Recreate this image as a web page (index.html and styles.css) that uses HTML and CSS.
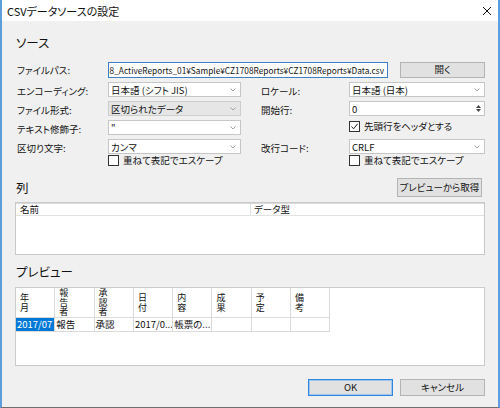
FILE: index.html
```html
<!DOCTYPE html>
<html lang="ja">
<head>
<meta charset="utf-8">
<title>CSVデータソースの設定</title>
<link rel="stylesheet" href="styles.css">
</head>
<body>
<div class="window">
  <div class="titlebar">
    <span class="title">CSVデータソースの設定</span>
    <svg class="close" viewBox="0 0 8 8" width="8" height="8"><path d="M0 0L8 8M8 0L0 8" stroke="#111" stroke-width="1"/></svg>
  </div>
  <div class="content">
    <h2 class="section-title">ソース</h2>
    <div class="path-row">
      <span class="lbl">ファイルパス:</span>
      <div class="textbox"><span class="path">8_ActiveReports_01¥Sample¥CZ1708Reports¥CZ1708Reports¥Data.csv</span></div>
      <button class="btn open">開く</button>
    </div>
    <div class="form-grid">
      <span class="lbl">エンコーディング:</span>
      <div class="combo"><span>日本語 (シフト JIS)</span><svg class="chev" viewBox="0 0 6 4" width="6" height="4"><path d="M0.5 0.5L3 3L5.5 0.5" fill="none" stroke="#999" stroke-width="0.9"/></svg></div>
      <span></span>
      <span class="lbl">ロケール:</span>
      <div class="combo"><span>日本語 (日本)</span><svg class="chev" viewBox="0 0 6 4" width="6" height="4"><path d="M0.5 0.5L3 3L5.5 0.5" fill="none" stroke="#999" stroke-width="0.9"/></svg></div>

      <span class="lbl">ファイル形式:</span>
      <div class="combo readonly"><span>区切られたデータ</span><svg class="chev" viewBox="0 0 6 4" width="6" height="4"><path d="M0.5 0.5L3 3L5.5 0.5" fill="none" stroke="#999" stroke-width="0.9"/></svg></div>
      <span></span>
      <span class="lbl">開始行:</span>
      <div class="combo numeric"><span>0</span>
        <div class="spin">
          <svg viewBox="0 0 5 3" width="5" height="3"><path d="M0 3L2.5 0L5 3Z" fill="#444"/></svg>
          <svg viewBox="0 0 5 3" width="5" height="3"><path d="M0 0L2.5 3L5 0Z" fill="#444"/></svg>
        </div>
      </div>

      <span class="lbl">テキスト修飾子:</span>
      <div class="combo"><span>"</span><svg class="chev" viewBox="0 0 6 4" width="6" height="4"><path d="M0.5 0.5L3 3L5.5 0.5" fill="none" stroke="#999" stroke-width="0.9"/></svg></div>
      <span></span>
      <span></span>
      <div class="check"><span class="box"><svg viewBox="0 0 9 9" width="9" height="9"><path d="M1.5 4.5L3.6 6.8L7.6 1.8" fill="none" stroke="#222" stroke-width="1"/></svg></span><span>先頭行をヘッダとする</span></div>

      <span class="lbl">区切り文字:</span>
      <div class="combo"><span>カンマ</span><svg class="chev" viewBox="0 0 6 4" width="6" height="4"><path d="M0.5 0.5L3 3L5.5 0.5" fill="none" stroke="#999" stroke-width="0.9"/></svg></div>
      <span></span>
      <span class="lbl">改行コード:</span>
      <div class="combo"><span>CRLF</span><svg class="chev" viewBox="0 0 6 4" width="6" height="4"><path d="M0.5 0.5L3 3L5.5 0.5" fill="none" stroke="#999" stroke-width="0.9"/></svg></div>

      <span></span>
      <div class="check"><span class="box"></span><span>重ねて表記でエスケープ</span></div>
      <span></span>
      <span></span>
      <div class="check"><span class="box"></span><span>重ねて表記でエスケープ</span></div>
    </div>

    <div class="list-head">
      <h2 class="section-title">列</h2>
      <button class="btn fetch">プレビューから取得</button>
    </div>
    <div class="listview">
      <div class="lv-head">
        <div class="lv-col name">名前</div>
        <div class="lv-col type">データ型</div>
      </div>
    </div>

    <h2 class="section-title preview-title">プレビュー</h2>
    <div class="gridbox">
      <div class="pv">
        <div class="hc">年<br>月</div>
        <div class="hc">報<br>告<br>者</div>
        <div class="hc">承<br>認<br>者</div>
        <div class="hc">日<br>付</div>
        <div class="hc">内<br>容</div>
        <div class="hc">成<br>果</div>
        <div class="hc">予<br>定</div>
        <div class="hc">備<br>考</div>
        <div class="dc selected">2017/07</div>
        <div class="dc">報告</div>
        <div class="dc">承認</div>
        <div class="dc">2017/0...</div>
        <div class="dc">帳票の...</div>
        <div class="dc"></div>
        <div class="dc"></div>
        <div class="dc"></div>
      </div>
    </div>

    <div class="footer">
      <button class="btn ok">OK</button>
      <button class="btn">キャンセル</button>
    </div>
  </div>
</div>
</body>
</html>
```

FILE: styles.css
```css
html, body {
  margin: 0;
  padding: 0;
  background: #f0f0f0;
}

.window {
  width: 500px;
  height: 408px;
  box-sizing: border-box;
  background: #f0f0f0;
  border-left: 2px solid #5e9ddb;
  border-right: 2px solid #5e9ddb;
  border-bottom: 1px solid #6e6e6e;
  font-family: "Noto Sans CJK JP", "Noto Sans", sans-serif;
  font-feature-settings: "palt";
  font-size: 9.5px;
  color: #111;
  display: flex;
  flex-direction: column;
}

.titlebar {
  height: 21px;
  flex-shrink: 0;
  background: #fff;
  display: flex;
  align-items: center;
  justify-content: space-between;
  padding: 0 7px 0 5px;
}

.title {
  font-size: 11px;
  line-height: 14px;
}

.close {
  display: block;
}

.content {
  flex: 1;
  display: flex;
  flex-direction: column;
  padding: 14px 13px 0 13px;
}

.section-title {
  margin: 0;
  font-size: 12.5px;
  font-weight: normal;
  line-height: 16px;
  padding-left: 1px;
}

.lbl {
  padding-left: 2px;
  line-height: 15px;
  white-space: nowrap;
}

.path-row {
  display: flex;
  align-items: center;
  height: 16px;
  margin-top: 11px;
}

.path-row .lbl {
  width: 93px;
  box-sizing: border-box;
  flex-shrink: 0;
}

.textbox {
  flex: 0 0 280px;
  height: 16px;
  box-sizing: border-box;
  border: 1px solid #3f7fc9;
  background: #fff;
  display: flex;
  justify-content: flex-end;
  align-items: center;
  overflow: hidden;
  padding-right: 3px;
}

.path {
  white-space: nowrap;
  flex-shrink: 0;
  font-size: 8.3px;
}

.btn {
  font-family: inherit;
  font-feature-settings: "palt";
  font-size: 9.5px;
  color: #111;
  background: #e1e1e1;
  border: 1px solid #b4b4b4;
  padding: 0;
  margin: 0;
  box-sizing: border-box;
  line-height: 1;
}

.open {
  width: 85px;
  height: 16px;
  margin-left: 12px;
}

.form-grid {
  display: grid;
  grid-template-columns: 93px 133px 18px 90px 136px;
  grid-template-rows: 19px 19px 19px 15px 12px;
  margin-top: 4px;
}

.form-grid .lbl {
  padding-top: 2px;
}

.combo {
  height: 15px;
  box-sizing: border-box;
  border: 1px solid #c6c6c6;
  background: #fff;
  display: flex;
  align-items: center;
  padding-left: 2px;
  white-space: nowrap;
}

.combo.readonly {
  background: #e6e6e6;
  border-color: #cdcdcd;
}

.chev {
  margin-left: auto;
  margin-right: 4px;
  display: block;
}

.numeric {
  padding-right: 3px;
}

.spin {
  margin-left: auto;
  display: flex;
  flex-direction: column;
  gap: 1px;
}

.spin svg {
  display: block;
}

.check {
  display: flex;
  align-items: center;
  gap: 4px;
  height: 12px;
  white-space: nowrap;
}

.box {
  width: 11px;
  height: 11px;
  box-sizing: border-box;
  border: 1px solid #333;
  background: #fff;
  display: flex;
  align-items: center;
  justify-content: center;
  flex-shrink: 0;
}

.box svg {
  display: block;
}

.list-head {
  display: flex;
  justify-content: space-between;
  align-items: center;
  height: 19px;
  margin-top: 12px;
}

.fetch {
  width: 85px;
  height: 19px;
  margin-right: 3px;
}

.listview {
  margin-top: 5px;
  height: 53px;
  box-sizing: border-box;
  border: 1px solid #c9c9c9;
  background: #fff;
}

.lv-head {
  display: flex;
  height: 13px;
  box-sizing: border-box;
  border-top: 1px solid #dadada;
  border-bottom: 1px solid #e2e2e2;
}

.lv-col {
  line-height: 11px;
  padding-left: 4px;
  box-sizing: border-box;
}

.lv-col.name {
  width: 235px;
  border-right: 1px solid #e2e2e2;
}

.lv-col.type {
  padding-left: 3px;
  flex: 1;
}

.preview-title {
  margin-top: 9px;
}

.gridbox {
  margin-top: 7px;
  height: 79px;
  box-sizing: border-box;
  border: 1px solid #cbcbcb;
  background: #fff;
}

.pv {
  display: grid;
  grid-template-columns: repeat(8, 39.3px);
  grid-template-rows: 30px 14px;
}

.hc, .dc {
  box-sizing: border-box;
  border-right: 1px solid #dadada;
  border-bottom: 1px solid #dadada;
  white-space: nowrap;
}

.hc {
  display: flex;
  flex-direction: column;
  justify-content: center;
  padding-left: 4px;
  font-size: 9px;
  line-height: 9.5px;
}

.dc {
  overflow: hidden;
  padding-left: 1px;
  font-size: 9.5px;
  line-height: 13px;
}

.dc.selected {
  background: #0078d7;
  color: #fff;
}

.footer {
  display: flex;
  justify-content: flex-end;
  gap: 7px;
  margin-top: 13px;
}

.footer .btn {
  width: 85px;
  height: 17px;
}

.footer .ok {
  border-color: #2f86dc;
  box-shadow: inset 0 0 0 1px #9cc6ee;
}
```
